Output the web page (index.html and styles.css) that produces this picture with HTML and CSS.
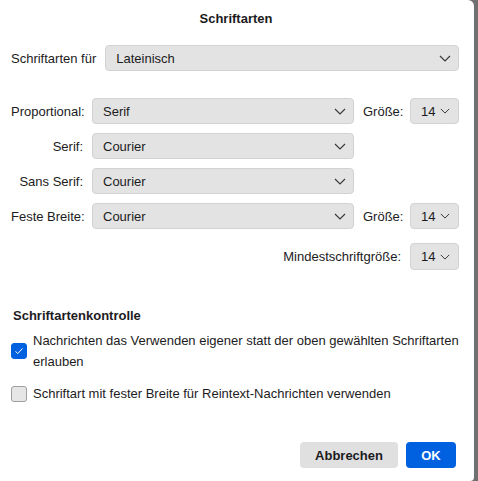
FILE: index.html
```html
<!DOCTYPE html>
<html lang="de">
<head>
<meta charset="utf-8">
<title>Schriftarten</title>
<link rel="stylesheet" href="styles.css">
</head>
<body>
<div class="dialog">
  <h1 class="title">Schriftarten</h1>

  <div class="lang-row">
    <span class="label">Schriftarten für</span>
    <div class="select wide"><span>Lateinisch</span><svg class="chev" viewBox="0 0 12 7"><path d="M1 1l5 5 5-5"/></svg></div>
  </div>

  <div class="font-grid">
    <span class="label right">Proportional:</span>
    <div class="select"><span>Serif</span><svg class="chev" viewBox="0 0 12 7"><path d="M1 1l5 5 5-5"/></svg></div>
    <span class="label">Größe:</span>
    <div class="select small"><span>14</span><svg class="chev" viewBox="0 0 12 7"><path d="M1 1l5 5 5-5"/></svg></div>

    <span class="label right">Serif:</span>
    <div class="select"><span>Courier</span><svg class="chev" viewBox="0 0 12 7"><path d="M1 1l5 5 5-5"/></svg></div>
    <span></span><span></span>

    <span class="label right">Sans Serif:</span>
    <div class="select"><span>Courier</span><svg class="chev" viewBox="0 0 12 7"><path d="M1 1l5 5 5-5"/></svg></div>
    <span></span><span></span>

    <span class="label right">Feste Breite:</span>
    <div class="select"><span>Courier</span><svg class="chev" viewBox="0 0 12 7"><path d="M1 1l5 5 5-5"/></svg></div>
    <span class="label">Größe:</span>
    <div class="select small"><span>14</span><svg class="chev" viewBox="0 0 12 7"><path d="M1 1l5 5 5-5"/></svg></div>
  </div>

  <div class="min-row">
    <span class="label">Mindestschriftgröße:</span>
    <div class="select small"><span>14</span><svg class="chev" viewBox="0 0 12 7"><path d="M1 1l5 5 5-5"/></svg></div>
  </div>

  <h2 class="section">Schriftartenkontrolle</h2>

  <div class="check-row">
    <span class="box checked"><svg viewBox="0 0 16 16"><path d="M4 8.3l2.6 2.7L12 5"/></svg></span>
    <span class="check-text">Nachrichten das Verwenden eigener statt der oben gewählten Schriftarten erlauben</span>
  </div>
  <div class="check-row single">
    <span class="box"></span>
    <span class="check-text">Schriftart mit fester Breite für Reintext-Nachrichten verwenden</span>
  </div>

  <div class="actions">
    <button class="btn">Abbrechen</button>
    <button class="btn primary">OK</button>
  </div>
</div>
</body>
</html>
```

FILE: styles.css
```css
html, body {
  margin: 0;
  height: 100%;
}

body {
  background: #707070;
  font-family: "Liberation Sans", Arial, sans-serif;
  font-size: 13px;
  color: #1c1b22;
  display: flex;
}

.dialog {
  width: 474px;
  height: 481px;
  box-sizing: border-box;
  background: #ffffff;
  border-top-right-radius: 6px;
  border-bottom-right-radius: 4px;
  padding: 10px 15px 0 11px;
  display: flex;
  flex-direction: column;
}

.title {
  margin: 0;
  font-size: 13px;
  font-weight: bold;
  line-height: 16px;
  text-align: center;
  padding-left: 2px;
  padding-top: 1px;
}

.label {
  white-space: nowrap;
}

.label.right {
  text-align: right;
}

.select {
  height: 26px;
  box-sizing: border-box;
  background: #e3e3e3;
  border: 1px solid #d2d2d2;
  border-radius: 4px;
  display: flex;
  align-items: center;
  justify-content: space-between;
  padding: 0 7px 0 10px;
}

.select.wide {
  flex: 1;
}

.select.small {
  width: 49px;
  padding-right: 8px;
}

.chev {
  width: 12px;
  height: 7px;
  fill: none;
  stroke: #3a3a3a;
  stroke-width: 1.2;
}

.select.small .chev {
  width: 10px;
  height: 6px;
}

.lang-row {
  margin-top: 18px;
  display: flex;
  align-items: center;
  gap: 9px;
}

.lang-row .select {
  padding-left: 10px;
}

.font-grid {
  margin-top: 27px;
  display: grid;
  grid-template-columns: 72px 262px 38px 49px;
  column-gap: 9px;
  row-gap: 9px;
  align-items: center;
}

.font-grid .select {
  height: 26px;
}

.min-row {
  margin-top: 14px;
  display: flex;
  justify-content: flex-end;
  align-items: center;
  gap: 9px;
}

.min-row .select {
  height: 27px;
}

.section {
  margin: 38px 0 0 2px;
  font-size: 13px;
  font-weight: bold;
  line-height: 16px;
}

.check-row {
  margin-top: 6px;
  display: flex;
  align-items: center;
  gap: 6px;
}

.check-row.single {
  margin-top: 11px;
}

.check-text {
  line-height: 21px;
}

.box {
  flex: none;
  width: 16px;
  height: 16px;
  box-sizing: border-box;
  border: 1px solid #9e9e9e;
  border-radius: 3px;
  background: #e6e6e6;
  display: flex;
}

.box.checked {
  background: #0061e0;
  border-color: #0061e0;
}

.box svg {
  width: 14px;
  height: 14px;
  fill: none;
  stroke: #ffffff;
  stroke-width: 1.1;
}

.actions {
  margin-top: 38px;
  display: flex;
  justify-content: flex-end;
  gap: 8px;
  padding-right: 3px;
}

.btn {
  height: 26px;
  border: none;
  border-radius: 4px;
  font-family: inherit;
  font-size: 13px;
  font-weight: bold;
  color: #1c1b22;
  background: #e0e0e0;
  width: 98px;
}

.btn.primary {
  width: 50px;
  background: #0061e0;
  color: #ffffff;
}
```
